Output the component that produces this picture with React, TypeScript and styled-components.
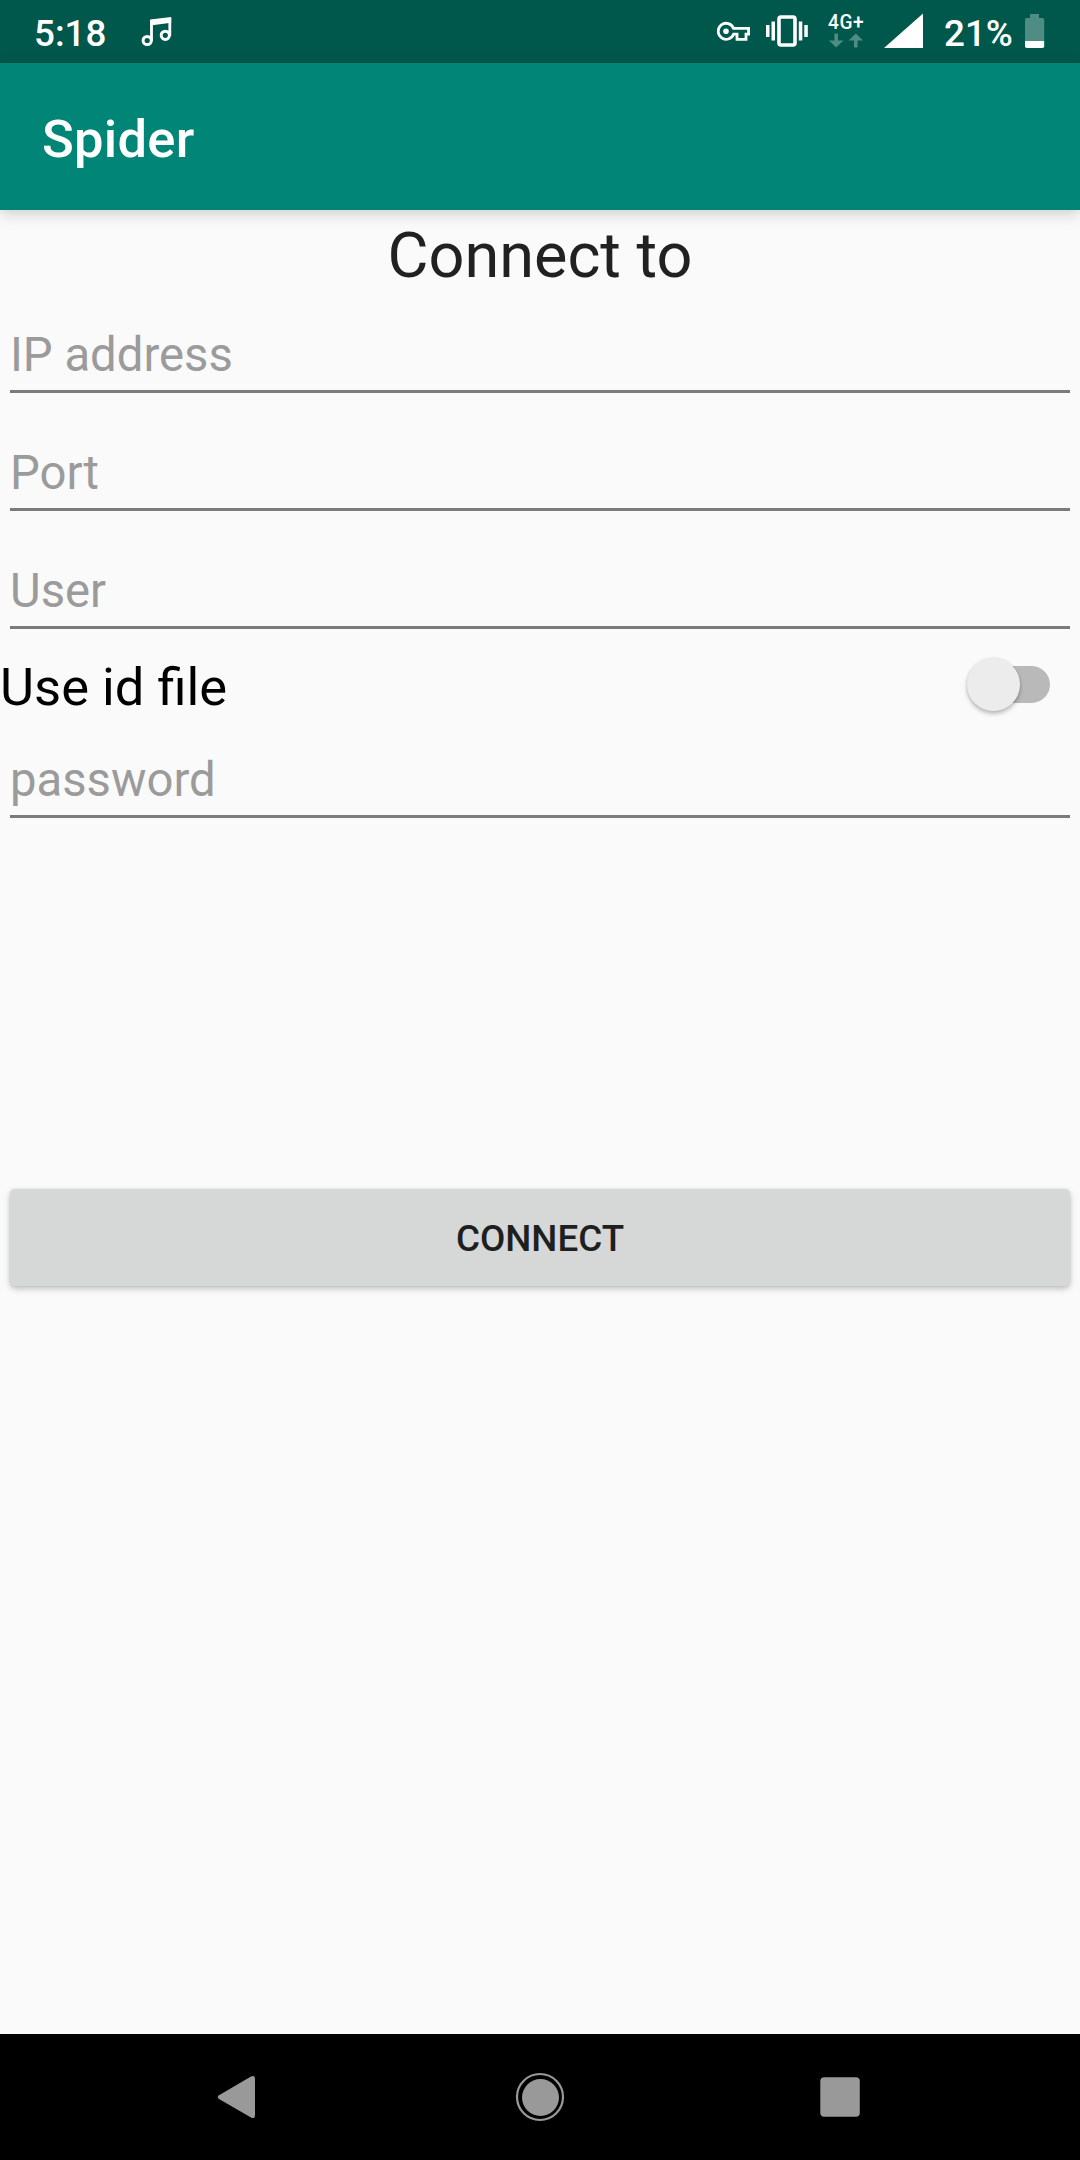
import { useState } from "react";
import styled, { createGlobalStyle } from "styled-components";

const GlobalStyle = createGlobalStyle`
  * { box-sizing: border-box; }
  body { margin: 0; background: #fafafa; font-family: Roboto, sans-serif; }
`;

const Screen = styled.div`
  display: flex;
  flex-direction: column;
  width: 1080px;
  height: 2160px;
  background: #fafafa;
  overflow: hidden;
`;

const StatusBar = styled.header`
  display: flex;
  align-items: flex-start;
  height: 63px;
  padding: 0 35px 0 34px;
  background: #00574b;
  color: #fff;
`;

const StatusText = styled.span<{ $width: number; $gap?: number }>`
  flex: none;
  width: ${(p) => p.$width}px;
  margin-left: ${(p) => p.$gap ?? 0}px;
  font-size: 36.75px;
  font-weight: 500;
  line-height: 67px;
  white-space: nowrap;
`;

const StatusIcon = styled.svg<{ $gap: number }>`
  flex: none;
  margin-left: ${(p) => p.$gap}px;
`;

const Spacer = styled.div`
  flex: 1;
`;

const Network = styled.div`
  display: flex;
  flex-direction: column;
  width: 36px;
  margin-left: 20px;
  padding-top: 11px;
`;

const NetworkType = styled.span`
  font-size: 21px;
  font-weight: 500;
  line-height: 22px;
  letter-spacing: 0.6px;
  white-space: nowrap;
  transform: scaleX(0.91);
  transform-origin: left;
`;

const AppBar = styled.div`
  flex: none;
  height: 147px;
  padding: 3px 0 0 42px;
  background: #008577;
  color: #fff;
  font-size: 52.5px;
  font-weight: 500;
  line-height: 147px;
  letter-spacing: 0.25px;
  box-shadow: 0 4px 14px rgba(0, 0, 0, 0.18);
  z-index: 1;
`;

const Form = styled.form`
  display: flex;
  flex: 1;
  flex-direction: column;
`;

const Title = styled.h1`
  margin: 0;
  padding-top: 9px;
  color: #212121;
  font-size: 63px;
  font-weight: 400;
  line-height: 73px;
  text-align: center;
`;

const FieldRow = styled.label`
  display: grid;
  height: 101px;
  margin: 0 10px 17px;
  padding-top: 33px;
  border-bottom: 3px solid #7b7b7b;
  font-size: 47.25px;
  line-height: 61px;
`;

const Hint = styled.span`
  grid-area: 1 / 1;
  color: #9b9b9b;
`;

const Input = styled.input`
  grid-area: 1 / 1;
  width: 100%;
  height: 60px;
  padding: 0;
  border: 0;
  outline: 0;
  background: transparent;
  color: #212121;
  font: inherit;
`;

const SwitchRow = styled.div`
  display: flex;
  justify-content: space-between;
  height: 71px;
  padding: 10px 30px 0 0;
  color: #000;
  font-size: 52.5px;
  line-height: 63px;
`;

const Switch = styled.button`
  display: flex;
  align-items: center;
  width: 74px;
  height: 37px;
  margin-top: 10px;
  padding: 0;
  border: 0;
  border-radius: 19px;
  background: #b9b9b9;
`;

const Thumb = styled.span<{ $on: boolean }>`
  flex: none;
  width: 53px;
  height: 53px;
  margin-left: ${(p) => (p.$on ? 30 : -9)}px;
  border-radius: 50%;
  background: #ececec;
  box-shadow: 0 3px 4px rgba(0, 0, 0, 0.24), 0 0 3px rgba(0, 0, 0, 0.1);
`;

const ConnectButton = styled.button`
  height: 97px;
  margin: 354px 10px 0;
  padding: 1px 0 0;
  border: 0;
  border-radius: 5px;
  background: #d6d7d7;
  box-shadow: 0 3px 6px rgba(0, 0, 0, 0.22), 0 0 3px rgba(0, 0, 0, 0.1);
  color: #1e1f1f;
  font-family: inherit;
  font-size: 36.75px;
  font-weight: 500;
`;

const NavBar = styled.nav`
  display: flex;
  flex: none;
  align-items: center;
  justify-content: center;
  gap: 240px;
  height: 126px;
  background: #000;
`;

const NavIcon = styled.svg`
  width: 60px;
  height: 60px;
  fill: #999;
`;

function Field({ hint, type = "text" }: { hint: string; type?: string }) {
  const [value, setValue] = useState("");
  return (
    <FieldRow>
      {value === "" && <Hint>{hint}</Hint>}
      <Input type={type} value={value} onChange={(e) => setValue(e.target.value)} />
    </FieldRow>
  );
}

export default function App() {
  const [useIdFile, setUseIdFile] = useState(false);
  return (
    <>
      <GlobalStyle />
      <Screen>
        <StatusBar>
          <StatusText $width={74}>5:18</StatusText>
          <StatusIcon $gap={32} width="34" height="63" viewBox="140 0 34 63" fill="none" stroke="#fff">
            <circle cx="147.2" cy="40.5" r="4.1" strokeWidth="3" />
            <circle cx="165.3" cy="35.3" r="4.1" strokeWidth="3" />
            <path d="M151.5 41V20M169.8 36V18" strokeWidth="2.8" />
            <path d="M150.2 19.4L171.2 17V22.8L150.2 25.6Z" fill="#fff" stroke="none" />
          </StatusIcon>
          <Spacer />
          <StatusIcon $gap={0} width="34" height="63" viewBox="717 0 34 63" fill="none" stroke="#fff">
            <path d="M733.6 28.4A8 8 0 1 0 733.6 34.2H737V39.4H746V34.2H748.6V28.4Z" strokeWidth="2.8" />
            <circle cx="726" cy="31.3" r="2.8" fill="#fff" stroke="none" />
          </StatusIcon>
          <StatusIcon $gap={15} width="42" height="63" viewBox="766 0 42 63">
            <rect x="779" y="17" width="16" height="28" rx="2" fill="none" stroke="#fff" strokeWidth="3.6" />
            <path d="M766 25h3.5v12H766ZM771.5 21.5h3.5v19h-3.5ZM798.8 21.5h3.5v19h-3.5ZM804.3 25h3.5v12h-3.5Z" fill="#fff" />
          </StatusIcon>
          <Network>
            <NetworkType>4G+</NetworkType>
            <svg width="36" height="15" viewBox="828 33.5 36 15" fill="#4f8c83">
              <path d="M834.4 34h3.6v7h5.5l-7.3 7-7.3-7h5.5Z" />
              <path d="M854 48h3.6v-7h5.5l-7.3-7-7.3 7h5.5Z" />
            </svg>
          </Network>
          <StatusIcon $gap={20} width="39" height="63" viewBox="884 0 39 63">
            <path d="M884 48L923 13.5V48Z" fill="#fff" />
          </StatusIcon>
          <StatusText $width={69} $gap={21}>21%</StatusText>
          <StatusIcon $gap={12} width="20" height="63" viewBox="1025 0 20 63">
            <path d="M1030 14h9v4h3.5q1.7 0 1.7 1.7V41h-19.2V19.7q0-1.7 1.7-1.7h3.3Z" fill="#4f8c83" />
            <path d="M1025 41h19.2v5.3q0 1.7-1.7 1.7h-15.8q-1.7 0-1.7-1.7Z" fill="#fff" />
          </StatusIcon>
        </StatusBar>
        <AppBar>Spider</AppBar>
        <Form onSubmit={(e) => e.preventDefault()}>
          <Title>Connect to</Title>
          <Field hint="IP address" />
          <Field hint="Port" />
          <Field hint="User" />
          <SwitchRow>
            <span>Use id file</span>
            <Switch type="button" role="switch" aria-checked={useIdFile} onClick={() => setUseIdFile(!useIdFile)}>
              <Thumb $on={useIdFile} />
            </Switch>
          </SwitchRow>
          <Field hint="password" type="password" />
          <ConnectButton type="submit">CONNECT</ConnectButton>
        </Form>
        <NavBar>
          <NavIcon viewBox="210 2067 60 60">
            <path d="M219 2095.2L251 2076.4Q255 2074.6 255 2079V2115Q255 2119.4 251 2117.6L219 2099Q216.5 2097 219 2095.2Z" />
          </NavIcon>
          <NavIcon viewBox="510 2067 60 60">
            <circle cx="540" cy="2097" r="23" fill="none" stroke="#999" strokeWidth="2.2" />
            <circle cx="540.5" cy="2097.5" r="18.5" />
          </NavIcon>
          <NavIcon viewBox="810 2067 60 60">
            <rect x="820.3" y="2077.3" width="39.5" height="39.5" rx="4" />
          </NavIcon>
        </NavBar>
      </Screen>
    </>
  );
}
